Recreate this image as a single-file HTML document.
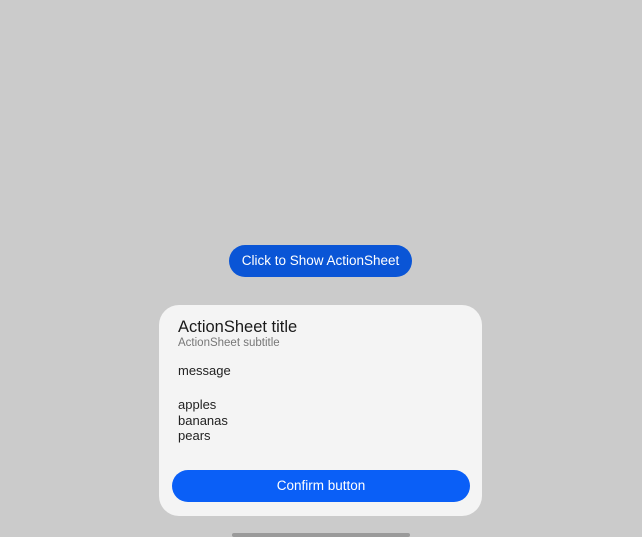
<!DOCTYPE html>
<html><head><style>
body{margin:0;width:642px;height:536px;background:#cbcbcb;position:relative;overflow:hidden;font-family:"Liberation Sans",sans-serif;}
.b1{position:absolute;left:229px;top:245px;width:183px;height:32px;border-radius:16px;background:#0a55d6;color:#fff;font-size:13.5px;line-height:32px;text-align:center;}
.card{position:absolute;left:159px;top:305px;width:323px;height:211px;border-radius:20px;background:#f4f4f4;}
.t{position:absolute;left:19px;top:13px;font-size:16.5px;color:#1a1a1a;}
.s{position:absolute;left:19px;top:32px;font-size:11.5px;color:#777;}
.m{position:absolute;left:19px;top:58px;font-size:13px;color:#222;}
.l{position:absolute;left:19px;top:92px;font-size:13px;line-height:15.5px;color:#222;}
.c{position:absolute;left:13px;top:165px;width:298px;height:32px;border-radius:16px;background:#0a5ff7;color:#fff;font-size:13.5px;line-height:32px;text-align:center;}
.bar{position:absolute;left:232px;top:533px;width:178px;height:4px;background:#9a9a9a;border-radius:2px;}
</style></head><body>
<div class="b1">Click to Show ActionSheet</div>
<div class="card">
<div class="t">ActionSheet title</div>
<div class="s">ActionSheet subtitle</div>
<div class="m">message</div>
<div class="l">apples<br>bananas<br>pears</div>
<div class="c">Confirm button</div>
</div>
<div class="bar"></div>
</body></html>
